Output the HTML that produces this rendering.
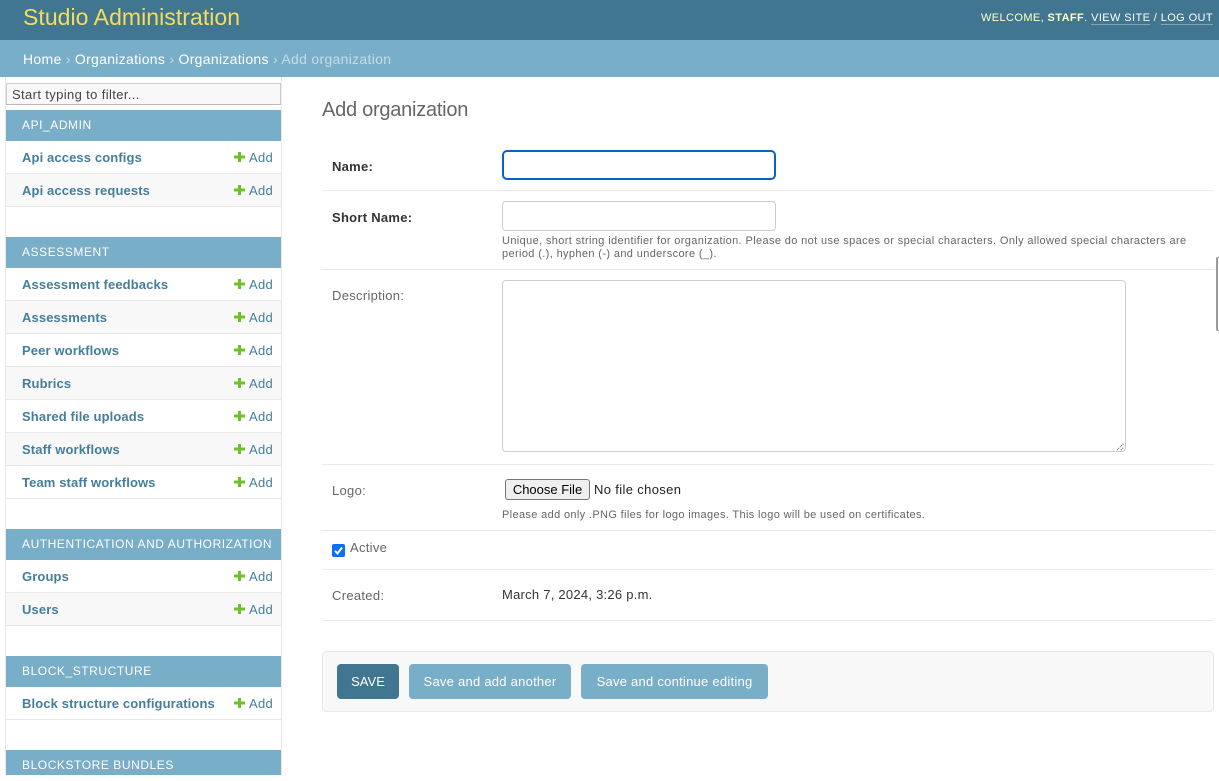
<!DOCTYPE html>
<html><head><meta charset="utf-8"><style>
*{box-sizing:border-box}
html,body{margin:0;padding:0;width:1219px;height:775px;overflow:hidden;background:#fff;font-family:"Liberation Sans",sans-serif;font-size:13px;color:#333}
.a{position:absolute;white-space:nowrap}
#hd{left:0;top:0;width:1219px;height:40px;background:#417690}
#bc{left:0;top:40px;width:1219px;height:37px;background:#79aec8}
#side{left:5px;top:77px;width:277px;height:698px;border-left:1px solid #e8e8e8;border-right:1px solid #e8e8e8}
.cap{left:6px;width:275px;height:31px;background:#79aec8;color:#fff;font-size:12px;line-height:31px;padding-left:16px;letter-spacing:.56px}
.row{left:6px;width:275px;height:33px;border-bottom:1px solid #e8e8e8;background:#fff;line-height:34px;font-size:13px}
.row.alt{background:#f8f8f8}
.row b{position:absolute;left:16px;color:#447e9b;top:0;letter-spacing:.12px}
.row span{position:absolute;left:243px;color:#447e9b;top:0;letter-spacing:.3px}
.row svg{position:absolute;left:228px;top:11px}
.line{left:322px;width:892px;height:1px;background:#e8e8e8}
.lab{left:332px;font-size:13px;color:#666;letter-spacing:.3px}
.lab b{letter-spacing:.28px}
.help{left:502px;font-size:11px;color:#666;line-height:13px;letter-spacing:.37px}
.inp{border:1px solid #ccc;border-radius:4px;background:#fff}
.btn{top:664px;height:35px;border-radius:4px;background:#79aec8;color:#fff;font-size:13px;line-height:35px;text-align:center;letter-spacing:.25px}
</style></head><body>
<div class="a" id="hd"></div>
<div class="a" style="left:23px;top:3px;font-size:23px;line-height:28px;letter-spacing:.05px;color:#f5dd5d">Studio Administration</div>
<div class="a" style="right:6px;top:11px;font-size:11px;line-height:14px;letter-spacing:.4px;color:#ffc"><span>WELCOME, </span><b>STAFF</b>. <span style="color:#fff;border-bottom:1px solid rgba(255,255,255,.35)">VIEW SITE</span> / <span style="color:#fff;border-bottom:1px solid rgba(255,255,255,.35)">LOG OUT</span></div>
<div class="a" id="bc"></div>
<div class="a" style="left:23px;top:51px;font-size:14px;line-height:16px;letter-spacing:.3px;color:#fff">Home <span style="color:#c4dce8">›</span> Organizations <span style="color:#c4dce8">›</span> Organizations <span style="color:#c4dce8">›</span> <span style="color:#c4dce8">Add organization</span></div>

<div class="a" id="side"></div>
<div class="a" style="left:6px;top:83px;width:275px;height:22px;border:1px solid #ccc;border-bottom-color:#bbb;background:#f8f8f8;font-size:13px;line-height:21px;padding-left:5px;letter-spacing:.37px;color:#444">Start typing to filter...</div>

<div class="a cap" style="top:110px">API_ADMIN</div>
<div class="a row" style="top:141px"><b>Api access configs</b><svg width="11" height="10" viewBox="0 0 11 10"><path d="M4 0h3v3.500h4v3h-4v3.500h-3v-3.500h-4v-3h4z" fill="#70bf2b"/></svg><span>Add</span></div>
<div class="a row alt" style="top:174px"><b>Api access requests</b><svg width="11" height="10" viewBox="0 0 11 10"><path d="M4 0h3v3.500h4v3h-4v3.500h-3v-3.500h-4v-3h4z" fill="#70bf2b"/></svg><span>Add</span></div>

<div class="a cap" style="top:237px">ASSESSMENT</div>
<div class="a row" style="top:268px"><b>Assessment feedbacks</b><svg width="11" height="10" viewBox="0 0 11 10"><path d="M4 0h3v3.500h4v3h-4v3.500h-3v-3.500h-4v-3h4z" fill="#70bf2b"/></svg><span>Add</span></div>
<div class="a row alt" style="top:301px"><b>Assessments</b><svg width="11" height="10" viewBox="0 0 11 10"><path d="M4 0h3v3.500h4v3h-4v3.500h-3v-3.500h-4v-3h4z" fill="#70bf2b"/></svg><span>Add</span></div>
<div class="a row" style="top:334px"><b>Peer workflows</b><svg width="11" height="10" viewBox="0 0 11 10"><path d="M4 0h3v3.500h4v3h-4v3.500h-3v-3.500h-4v-3h4z" fill="#70bf2b"/></svg><span>Add</span></div>
<div class="a row alt" style="top:367px"><b>Rubrics</b><svg width="11" height="10" viewBox="0 0 11 10"><path d="M4 0h3v3.500h4v3h-4v3.500h-3v-3.500h-4v-3h4z" fill="#70bf2b"/></svg><span>Add</span></div>
<div class="a row" style="top:400px"><b>Shared file uploads</b><svg width="11" height="10" viewBox="0 0 11 10"><path d="M4 0h3v3.500h4v3h-4v3.500h-3v-3.500h-4v-3h4z" fill="#70bf2b"/></svg><span>Add</span></div>
<div class="a row alt" style="top:433px"><b>Staff workflows</b><svg width="11" height="10" viewBox="0 0 11 10"><path d="M4 0h3v3.500h4v3h-4v3.500h-3v-3.500h-4v-3h4z" fill="#70bf2b"/></svg><span>Add</span></div>
<div class="a row" style="top:466px"><b>Team staff workflows</b><svg width="11" height="10" viewBox="0 0 11 10"><path d="M4 0h3v3.500h4v3h-4v3.500h-3v-3.500h-4v-3h4z" fill="#70bf2b"/></svg><span>Add</span></div>

<div class="a cap" style="top:529px">AUTHENTICATION AND AUTHORIZATION</div>
<div class="a row" style="top:560px"><b>Groups</b><svg width="11" height="10" viewBox="0 0 11 10"><path d="M4 0h3v3.500h4v3h-4v3.500h-3v-3.500h-4v-3h4z" fill="#70bf2b"/></svg><span>Add</span></div>
<div class="a row alt" style="top:593px"><b>Users</b><svg width="11" height="10" viewBox="0 0 11 10"><path d="M4 0h3v3.500h4v3h-4v3.500h-3v-3.500h-4v-3h4z" fill="#70bf2b"/></svg><span>Add</span></div>

<div class="a cap" style="top:656px">BLOCK_STRUCTURE</div>
<div class="a row" style="top:687px"><b>Block structure configurations</b><svg width="11" height="10" viewBox="0 0 11 10"><path d="M4 0h3v3.500h4v3h-4v3.500h-3v-3.500h-4v-3h4z" fill="#70bf2b"/></svg><span>Add</span></div>

<div class="a cap" style="top:750px;height:25px">BLOCKSTORE BUNDLES</div>

<div class="a" style="left:322px;top:98px;font-size:20px;line-height:24px;letter-spacing:-.25px;color:#666">Add organization</div>

<div class="a lab" style="top:159px;line-height:15px;color:#333"><b>Name:</b></div>
<div class="a inp" style="left:502px;top:150px;width:274px;height:30px;border:2px solid #0a63c4;border-radius:5px"></div>
<div class="a line" style="top:190px"></div>

<div class="a lab" style="top:210px;line-height:15px;color:#333"><b>Short Name:</b></div>
<div class="a inp" style="left:502px;top:201px;width:274px;height:30px"></div>
<div class="a help" style="top:235px">Unique, short string identifier for organization. Please do not use spaces or special characters. Only allowed special characters are<br>period (.), hyphen (-) and underscore (_).</div>
<div class="a line" style="top:269px"></div>

<div class="a lab" style="top:288px;line-height:15px">Description:</div>
<div class="a inp" style="left:502px;top:280px;width:624px;height:172px"></div>
<svg class="a" style="left:1116px;top:442px" width="9" height="9" viewBox="0 0 9 9"><path d="M1 8L8 1M5 8L8 5" stroke="#666" stroke-width="1" stroke-dasharray="1 1"/></svg>
<div class="a line" style="top:464px"></div>

<div class="a lab" style="top:483px;line-height:15px">Logo:</div>
<div class="a" style="left:505px;top:479px;width:85px;height:21px;border:1px solid #767676;border-radius:3px;background:#efefef;color:#000;font-size:13px;line-height:19px;text-align:center">Choose File</div>
<div class="a" style="left:594px;top:482px;font-size:13px;line-height:15px;letter-spacing:.35px;color:#222">No file chosen</div>
<div class="a help" style="top:509px;letter-spacing:.35px">Please add only .PNG files for logo images. This logo will be used on certificates.</div>
<div class="a line" style="top:530px"></div>

<svg class="a" style="left:332px;top:544px" width="13" height="13" viewBox="0 0 13 13"><rect width="13" height="13" rx="2" fill="#0b6ffb"/><path d="M3 6.800L5.500 9.500L10 3.500" fill="none" stroke="#fff" stroke-width="2"/></svg>
<div class="a lab" style="left:350px;top:540px;line-height:15px">Active</div>
<div class="a line" style="top:569px"></div>

<div class="a lab" style="top:588px;line-height:15px">Created:</div>
<div class="a" style="left:502px;top:587px;font-size:13px;line-height:15px;letter-spacing:.25px;color:#333">March 7, 2024, 3:26 p.m.</div>
<div class="a line" style="top:620px"></div>

<div class="a" style="left:322px;top:651px;width:892px;height:61px;background:#f8f8f8;border:1px solid #e8e8e8;border-radius:4px"></div>
<div class="a btn" style="left:337px;width:62px;background:#417690;letter-spacing:0">SAVE</div>
<div class="a btn" style="left:409px;width:162px">Save and add another</div>
<div class="a btn" style="left:581px;width:187px">Save and continue editing</div>

<div class="a" style="left:1216px;top:257px;width:8px;height:74px;border:1px solid #999;border-left:2px solid #999;border-right:0;border-radius:2px 0 0 2px;background:#fff"></div>
</body></html>
